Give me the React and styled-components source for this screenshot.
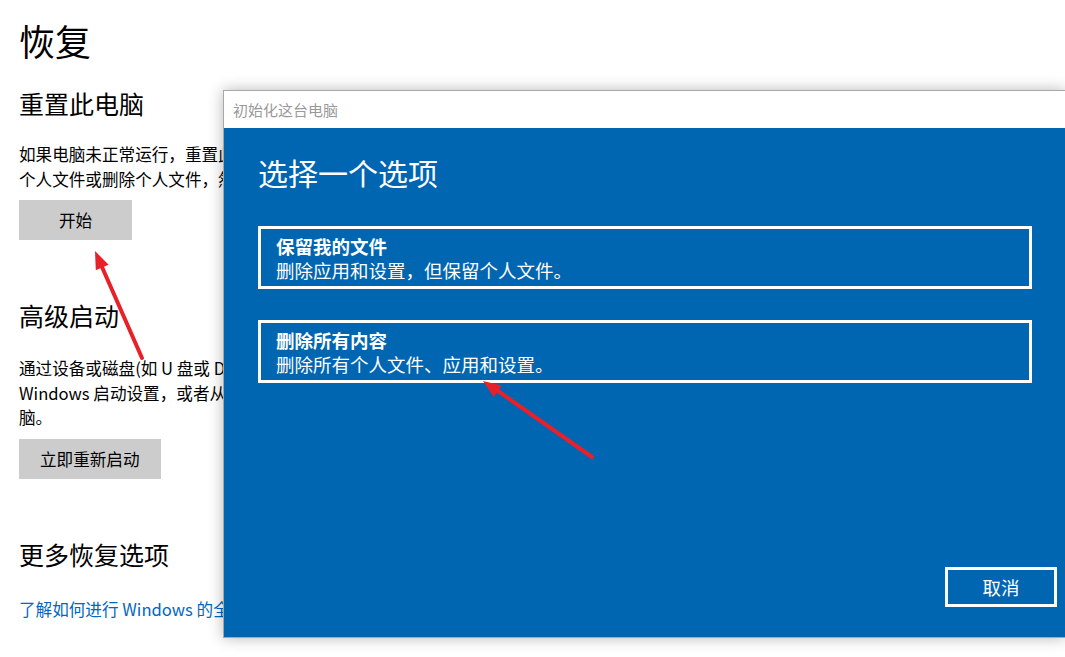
import styled, { createGlobalStyle } from "styled-components";

const GlobalStyle = createGlobalStyle`
  html, body {
    margin: 0;
    padding: 0;
    background: #ffffff;
    overflow: hidden;
  }
  body {
    font-family: "Noto Sans CJK SC", "Noto Sans", sans-serif;
  }
`;

export default function App() {
  return (
    <Screen>
      <GlobalStyle />
      <Page>
        <PageTitle>恢复</PageTitle>

        <Section $first>
          <SectionTitle>重置此电脑</SectionTitle>
          <Text>
            如果电脑未正常运行，重置此电脑可能会解决问题。重置时，你可以选择保留
            <br />
            个人文件或删除个人文件，然后重新安装 Windows。
          </Text>
          <GrayButton>开始</GrayButton>
        </Section>

        <Section>
          <SectionTitle $loose>高级启动</SectionTitle>
          <Text>
            通过设备或磁盘(如 U 盘或 DVD)启动，更改电脑的固件设置，更改
            <br />
            Windows 启动设置，或者从系统映像还原 Windows。这将重新启动电
            <br />
            脑。
          </Text>
          <GrayButton>立即重新启动</GrayButton>
        </Section>

        <Section>
          <SectionTitle $loose>更多恢复选项</SectionTitle>
          <Link href="#">了解如何进行 Windows 的全新安装以便开始全新的体验</Link>
        </Section>
      </Page>

      <Dialog>
        <TitleBar>初始化这台电脑</TitleBar>
        <DialogBody>
          <DialogHeading>选择一个选项</DialogHeading>
          <Options>
            <Option>
              <OptionTitle>保留我的文件</OptionTitle>
              <OptionText>删除应用和设置，但保留个人文件。</OptionText>
            </Option>
            <Option>
              <OptionTitle>删除所有内容</OptionTitle>
              <OptionText>删除所有个人文件、应用和设置。</OptionText>
            </Option>
          </Options>
          <Footer>
            <CancelButton>取消</CancelButton>
          </Footer>
        </DialogBody>
      </Dialog>

      <Arrows width="1065" height="657" viewBox="0 0 1065 657">
        <line x1="142" y1="358" x2="102" y2="267" stroke="#e8202a" strokeWidth="4" strokeLinecap="round" />
        <polygon points="95,251 108.6,264.7 95.8,270.3" fill="#e8202a" />
        <line x1="592" y1="457" x2="498" y2="391" stroke="#e8202a" strokeWidth="4" strokeLinecap="round" />
        <polygon points="483,381 501.8,385.6 493.8,397" fill="#e8202a" />
      </Arrows>
    </Screen>
  );
}

const Screen = styled.div`
  position: relative;
  width: 1065px;
  height: 657px;
  overflow: hidden;
`;

const Page = styled.div`
  display: flex;
  flex-direction: column;
  align-items: flex-start;
  padding: 16px 0 0 19px;
  color: #000000;
`;

const PageTitle = styled.h1`
  margin: 0;
  font-size: 36px;
  font-weight: 400;
  line-height: 48px;
`;

const Section = styled.div`
  display: flex;
  flex-direction: column;
  align-items: flex-start;
  margin-top: ${(p) => (p.$first ? "22px" : "58px")};
`;

const SectionTitle = styled.h2`
  margin: 0 0 ${(p) => (p.$loose ? "24px" : "22px")};
  font-size: 25px;
  font-weight: 400;
  line-height: 34px;
`;

const Text = styled.p`
  margin: 0 0 9px;
  font-size: 16.6px;
  line-height: 24.5px;
  white-space: nowrap;
`;

const GrayButton = styled.button`
  min-width: 113px;
  height: 40px;
  padding: 0 21px;
  border: none;
  background: #cccccc;
  color: #000000;
  font-family: "Noto Sans CJK SC", "Noto Sans", sans-serif;
  font-size: 16.6px;
`;

const Link = styled.a`
  margin-top: 2px;
  font-size: 16.6px;
  line-height: 24.5px;
  color: #0067c0;
  text-decoration: none;
  white-space: nowrap;
`;

const Dialog = styled.div`
  position: absolute;
  left: 223px;
  top: 90px;
  width: 841px;
  height: 546px;
  display: flex;
  flex-direction: column;
  border: 1px solid #a8a8a8;
  box-shadow: 0 0 14px rgba(0, 0, 0, 0.28);
`;

const TitleBar = styled.div`
  height: 37px;
  display: flex;
  align-items: center;
  padding-left: 9px;
  background: #ffffff;
  color: #9a9a9a;
  font-size: 15px;
`;

const DialogBody = styled.div`
  flex: 1;
  display: flex;
  flex-direction: column;
  padding: 24px 8px 30px 34px;
  background: #0066b2;
  color: #ffffff;
`;

const DialogHeading = styled.h3`
  margin: 0;
  font-size: 30px;
  font-weight: 400;
  line-height: 40px;
`;

const Options = styled.div`
  display: flex;
  flex-direction: column;
  gap: 31px;
  margin-top: 34px;
  width: 774px;
`;

const Option = styled.div`
  border: 3px solid #ffffff;
  padding: 5px 15px 4px;
  display: flex;
  flex-direction: column;
`;

const OptionTitle = styled.div`
  font-size: 18.5px;
  font-weight: 700;
  line-height: 24px;
`;

const OptionText = styled.div`
  font-size: 18.5px;
  line-height: 24px;
`;

const Footer = styled.div`
  margin-top: auto;
  display: flex;
  justify-content: flex-end;
`;

const CancelButton = styled.button`
  width: 112px;
  height: 40px;
  border: 3px solid #ffffff;
  background: transparent;
  color: #ffffff;
  font-family: "Noto Sans CJK SC", "Noto Sans", sans-serif;
  font-size: 18.5px;
`;

const Arrows = styled.svg`
  position: absolute;
  left: 0;
  top: 0;
  pointer-events: none;
`;
